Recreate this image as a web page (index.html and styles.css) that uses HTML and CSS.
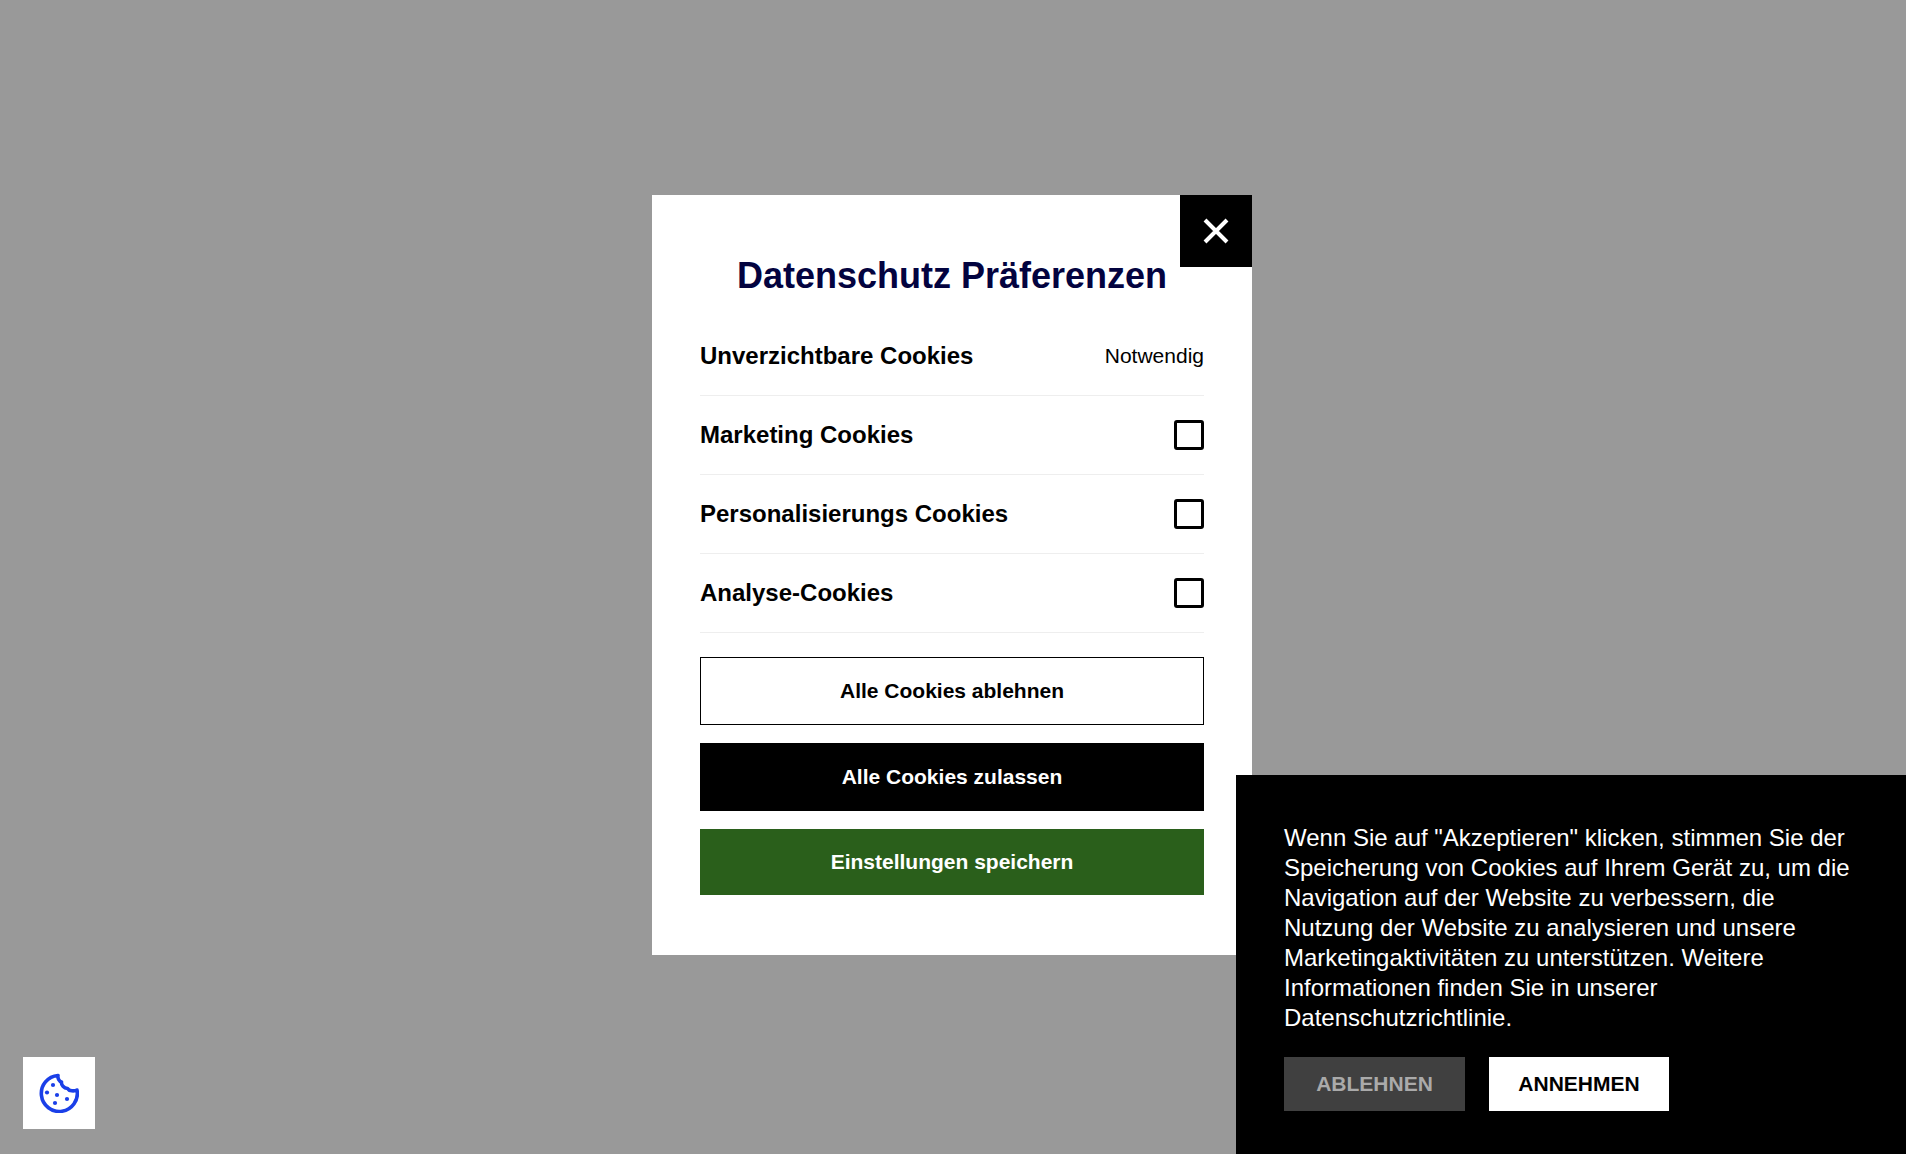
FILE: index.html
```html
<!DOCTYPE html>
<html lang="de">
<head>
<meta charset="utf-8">
<title>Datenschutz Präferenzen</title>
<link rel="stylesheet" href="styles.css">
</head>
<body>
<button class="cookie-fab" aria-label="Cookie-Einstellungen">
  <svg class="cookie-icon" viewBox="0 0 40 40" fill="none" stroke="#1a3fe8" stroke-width="3.6" stroke-linecap="round" stroke-linejoin="round">
    <path d="M19 2.500A18 18 0 1 0 38 17C35 18.500 30 18 28.500 15.500C25 15 22 12 22.500 9C20 8.500 18.500 5 19 2.500Z"/>
    <circle cx="14" cy="12" r="2.100" fill="#1a3fe8" stroke="none"/>
    <circle cx="8" cy="19.500" r="2.100" fill="#1a3fe8" stroke="none"/>
    <circle cx="18" cy="22" r="2.100" fill="#1a3fe8" stroke="none"/>
    <circle cx="16" cy="30" r="2.100" fill="#1a3fe8" stroke="none"/>
    <circle cx="28" cy="26" r="2.100" fill="#1a3fe8" stroke="none"/>
  </svg>
</button>
<section class="modal">
  <button class="close" aria-label="Schließen">
    <svg class="close-icon" viewBox="0 0 26 26" stroke="#fff" stroke-width="4"><path d="M2 2L24 24M24 2L2 24"/></svg>
  </button>
  <h1 class="title">Datenschutz Präferenzen</h1>
  <div class="row"><span class="row-label">Unverzichtbare Cookies</span><span class="row-note">Notwendig</span></div>
  <div class="row"><span class="row-label">Marketing Cookies</span><span class="check"></span></div>
  <div class="row"><span class="row-label">Personalisierungs Cookies</span><span class="check"></span></div>
  <div class="row"><span class="row-label">Analyse-Cookies</span><span class="check"></span></div>
  <div class="actions">
    <button class="action action-outline">Alle Cookies ablehnen</button>
    <button class="action action-black">Alle Cookies zulassen</button>
    <button class="action action-green">Einstellungen speichern</button>
  </div>
</section>
<aside class="banner">
  <p class="banner-text">Wenn Sie auf "Akzeptieren" klicken, stimmen Sie der Speicherung von Cookies auf Ihrem Gerät zu, um die Navigation auf der Website zu verbessern, die Nutzung der Website zu analysieren und unsere Marketingaktivitäten zu unterstützen. Weitere Informationen finden Sie in unserer Datenschutzrichtlinie.</p>
  <div class="banner-buttons">
    <button class="banner-btn banner-decline">ABLEHNEN</button>
    <button class="banner-btn banner-accept">ANNEHMEN</button>
  </div>
</aside>
</body>
</html>
```
FILE: styles.css
```css
* { box-sizing: border-box; }
html, body { margin: 0; height: 100%; }
body {
  position: relative;
  height: 1154px;
  overflow: hidden;
  background: #999;
  font-family: "Liberation Sans", Arial, sans-serif;
  color: #000;
}
button { font-family: inherit; border: 0; padding: 0; cursor: pointer; }
.modal {
  position: absolute;
  left: 652px;
  top: 195px;
  width: 600px;
  height: 760px;
  padding: 60px 48px;
  background: #fff;
}
.close {
  position: absolute;
  top: 0;
  right: 0;
  width: 72px;
  height: 72px;
  background: #000;
  display: flex;
  align-items: center;
  justify-content: center;
}
.close-icon { width: 26px; height: 26px; }
.title {
  margin: 0 0 20px;
  height: 42px;
  text-align: center;
  font-size: 36px;
  line-height: 42px;
  font-weight: 700;
  color: #03033f;
}
.row {
  display: flex;
  align-items: center;
  justify-content: space-between;
  height: 79px;
  padding-bottom: 1px;
  border-bottom: 1px solid #eee;
}
.row-label { font-size: 24px; font-weight: 700; }
.row-note { font-size: 21px; }
.check {
  width: 30px;
  height: 30px;
  border: 3px solid #000;
  border-radius: 3px;
}
.actions {
  display: flex;
  flex-direction: column;
  gap: 18px;
  margin-top: 24px;
}
.action {
  width: 100%;
  height: 68px;
  font-size: 21px;
  font-weight: 700;
}
.action-outline { background: #fff; border: 1px solid #000; color: #000; }
.action-black { background: #000; color: #fff; }
.action-green { height: 66px; background: #2a5f1b; color: #fff; }
.banner {
  position: absolute;
  left: 1236px;
  top: 775px;
  width: 670px;
  height: 379px;
  padding: 48px;
  background: #000;
  color: #fff;
}
.banner-text {
  margin: 0 0 24px;
  font-size: 24px;
  line-height: 30px;
}
.banner-buttons { display: flex; gap: 24px; }
.banner-btn {
  width: 181px;
  height: 54px;
  font-size: 21px;
  font-weight: 700;
}
.banner-decline { background: #404040; color: #aaa; }
.banner-accept { width: 180px; background: #fff; color: #000; }
.cookie-fab {
  position: absolute;
  left: 23px;
  top: 1057px;
  width: 72px;
  height: 72px;
  background: #fff;
  display: flex;
  align-items: center;
  justify-content: center;
}
.cookie-icon { width: 40px; height: 40px; }
```
